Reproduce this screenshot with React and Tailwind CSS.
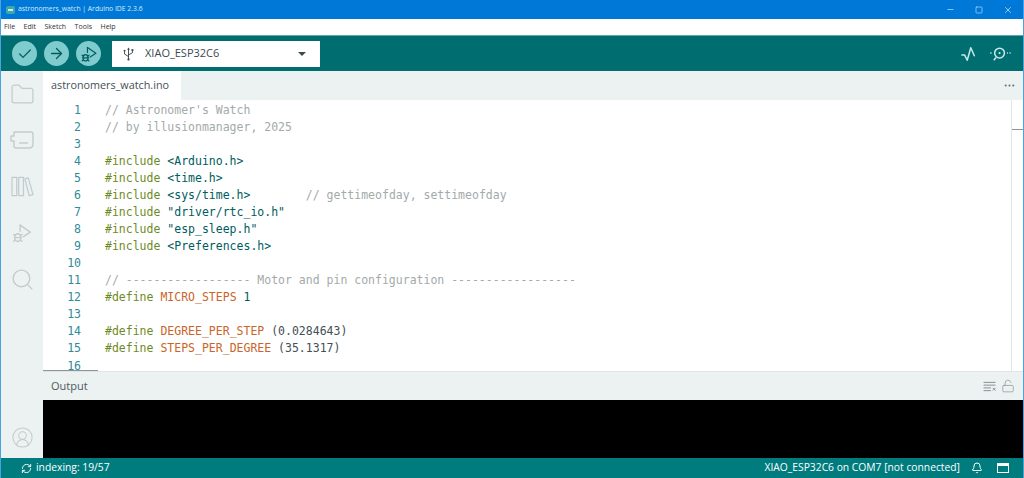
import React from 'react'
import { Check, ArrowRight, Minus, Square, X, Folder, Search, CircleUserRound, RefreshCw, Bell, LockOpen, Ellipsis } from 'lucide-react'

const uiFont = "font-['Open_Sans',sans-serif]"

// one entry per editor line, each one a list of [colour, text]
const green = 'text-[#6d8a1f]'
const teal = 'text-[#005c5f]'
const grey = 'text-[#a3aaaa]'
const orange = 'text-[#c9652a]'
const dark = 'text-[#434f54]'

const lines = [
  [[grey, "// Astronomer's Watch"]],
  [[grey, '// by illusionmanager, 2025']],
  [],
  [[green, '#include '], [teal, '<Arduino.h>']],
  [[green, '#include '], [teal, '<time.h>']],
  [[green, '#include '], [teal, '<sys/time.h>'], [grey, '        // gettimeofday, settimeofday']],
  [[green, '#include '], [teal, '"driver/rtc_io.h"']],
  [[green, '#include '], [teal, '"esp_sleep.h"']],
  [[green, '#include '], [teal, '<Preferences.h>']],
  [],
  [[grey, '// ------------------ Motor and pin configuration ------------------']],
  [[green, '#define '], [orange, 'MICRO_STEPS '], [teal, '1']],
  [],
  [[green, '#define '], [orange, 'DEGREE_PER_STEP '], [dark, '(0.0284643)']],
  [[green, '#define '], [orange, 'STEPS_PER_DEGREE '], [dark, '(35.1317)']],
  [],
]

function DebugIcon({ className }) {
  return (
    <svg viewBox="0 0 26 26" fill="none" stroke="currentColor" strokeWidth="1.5" className={className}>
      <path d="M11 4.5 L22 12 L14.5 17" strokeLinejoin="round" strokeLinecap="round" />
      <path d="M11 4.5 V11" strokeLinecap="round" />
      <ellipse cx="8.5" cy="18" rx="3.4" ry="4.2" />
      <path d="M5 18 H12 M4 14.5 L6 15.8 M13 14.5 L11 15.8 M4 22 L6 20.5 M13 22 L11 20.5" strokeLinecap="round" />
    </svg>
  )
}

function BoardIcon({ className }) {
  return (
    <svg viewBox="0 0 24 18" fill="none" stroke="currentColor" strokeWidth="1.4" className={className}>
      <path d="M4 1 H21 Q23 1 23 3 V13 Q23 17 19 17 H6 Q4 17 4 15 V10 H1 V5 H4 Z" strokeLinejoin="round" />
      <path d="M9 12 H18" />
    </svg>
  )
}

function BooksIcon({ className }) {
  return (
    <svg viewBox="0 0 24 21" fill="none" stroke="currentColor" strokeWidth="1.3" className={className}>
      <path d="M1 1 H6 V20 H1 Z M8 1 H13 V20 H8 Z M14.5 2.5 L18 1.5 L23 19 L19 20 Z" strokeLinejoin="round" />
    </svg>
  )
}

function UsbIcon({ className }) {
  return (
    <svg viewBox="0 0 12 16" fill="none" stroke="currentColor" strokeWidth="1.1" className={className}>
      <path d="M6 2 V15" />
      <path d="M6 0.5 L7.6 3 H4.4 Z" fill="currentColor" stroke="none" />
      <circle cx="6" cy="14.2" r="1.3" fill="currentColor" stroke="none" />
      <path d="M1.5 5 V8 L6 11 M10.5 4 V6.5 L6 9" />
      <circle cx="1.5" cy="4.3" r="1.1" fill="currentColor" stroke="none" />
      <rect x="9.4" y="2.4" width="2.2" height="2.2" fill="currentColor" stroke="none" />
    </svg>
  )
}

function ClearIcon({ className }) {
  return (
    <svg viewBox="0 0 14 12" fill="none" stroke="currentColor" strokeWidth="1" className={className}>
      <path d="M0 1.5 H13 M0 4.5 H13 M0 7.5 H8 M0 10.5 H8 M10 7.5 L13 10.5 M13 7.5 L10 10.5" />
    </svg>
  )
}

function PlotterIcon({ className }) {
  return (
    <svg viewBox="0 0 18 18" fill="none" stroke="currentColor" strokeWidth="1.7" className={className}>
      <path d="M1 10 L4 10 L7 16 L11 2 L15 11" strokeLinejoin="round" strokeLinecap="round" />
    </svg>
  )
}

function MonitorIcon({ className }) {
  return (
    <svg viewBox="0 0 24 18" fill="none" stroke="currentColor" strokeWidth="1.7" className={className}>
      <circle cx="11.5" cy="8" r="5.5" />
      <circle cx="11.5" cy="8" r="1.2" fill="currentColor" stroke="none" />
      <path d="M7.5 13 L5 16 M1 8 H2.5 M20 8 H21 M22.7 8 H24" />
    </svg>
  )
}

function RoundButton({ children }) {
  return (
    <div className="w-[25px] h-[25px] rounded-full bg-[#7fcbcd] flex items-center justify-center text-[#005c5f]">
      {children}
    </div>
  )
}

export default function App() {
  return (
    <div className={`w-[1024px] h-[478px] overflow-hidden flex flex-col border-x border-[#4aa3df] bg-white ${uiFont}`}>
      {/* title bar */}
      <div className="h-[19px] shrink-0 bg-[#0078d7] text-white flex items-center pl-[5px]">
        <div className="w-[9px] h-[8px] rounded-[2px] bg-[#3fa9a9] mr-[3px] flex items-center justify-center">
          <div className="w-[5px] h-[2px] bg-[#cfe9e9]" />
        </div>
        <span className="text-[6.8px] text-[#d6ebfb]">astronomers_watch | Arduino IDE 2.3.6</span>
        <div className="ml-auto flex items-center text-[#b9dcf7]">
          <div className="w-[30px] flex justify-center"><Minus size={9} /></div>
          <div className="w-[28px] flex justify-center"><Square size={8} /></div>
          <div className="w-[30px] flex justify-center"><X size={10} /></div>
        </div>
      </div>

      {/* menu */}
      <div className="h-[16px] shrink-0 bg-white flex items-center gap-[8.5px] pl-[3px] text-[7px] text-[#333]">
        <span>File</span><span>Edit</span><span>Sketch</span><span>Tools</span><span>Help</span>
      </div>

      {/* toolbar */}
      <div className="h-[36px] shrink-0 bg-[#006d70] border-t border-[#5fa9ab] flex items-center pl-[11px] pr-[11px]">
        <div className="flex gap-[7px]">
          <RoundButton><Check size={16} strokeWidth={1.8} /></RoundButton>
          <RoundButton><ArrowRight size={17} strokeWidth={1.8} /></RoundButton>
          <RoundButton><DebugIcon className="w-[20px] h-[20px]" /></RoundButton>
        </div>
        <div className="ml-[11px] w-[208px] h-[26px] bg-white flex items-center pl-[11px] pr-[14px] text-[#3c4a4e]">
          <UsbIcon className="w-[11px] h-[14px]" />
          <span className="ml-[11px] text-[11px]">XIAO_ESP32C6</span>
          <div className="ml-auto w-0 h-0 border-x-[4px] border-x-transparent border-t-[4px] border-t-[#3c4a4e]" />
        </div>
        <div className="ml-auto flex items-center gap-[12px] text-[#c6e8e8] mr-[1px]">
          <PlotterIcon className="w-[16px] h-[16px]" />
          <MonitorIcon className="w-[22px] h-[16px]" />
        </div>
      </div>

      {/* main area */}
      <div className="flex-1 min-h-0 flex">
        <div className="w-[42px] shrink-0 bg-[#ecf1f1] flex flex-col items-center pt-[11px] text-[#c3cccc]">
          <Folder size={25} strokeWidth={1.2} />
          <BoardIcon className="w-[24px] h-[18px] mt-[24px]" />
          <BooksIcon className="w-[23px] h-[21px] mt-[27px]" />
          <DebugIcon className="w-[24px] h-[24px] mt-[24px]" />
          <Search size={25} strokeWidth={1.3} className="mt-[22px]" />
          <CircleUserRound size={23} strokeWidth={1.1} className="mt-auto mb-[9px]" />
        </div>

        <div className="flex-1 min-w-0 flex flex-col">
          {/* tabs */}
          <div className="h-[29px] shrink-0 bg-[#ecf1f1] flex items-center">
            <div className="w-[138px] h-full bg-white flex items-center pl-[8px] text-[10.8px] text-[#434f54]">
              astronomers_watch.ino
            </div>
            <Ellipsis size={13} className="ml-auto mr-[7px] text-[#6a7376]" />
          </div>

          {/* editor */}
          <div className="flex-1 min-h-0 relative overflow-hidden pt-[1.6px] font-['DejaVu_Sans_Mono',monospace] text-[11.5px] leading-[17.07px]">
            {lines.map((parts, i) => (
              <div key={i} className="flex h-[17.07px]">
                <span className="w-[38px] text-right text-[#2f8a9a] shrink-0">{i + 1}</span>
                <span className="ml-[24px] whitespace-pre">
                  {parts.map(([color, text], j) => (
                    <span key={j} className={color}>{text}</span>
                  ))}
                </span>
              </div>
            ))}
            <div className="absolute top-0 bottom-0 right-0 w-[12px] border-l border-[#e3e6e6]">
              <div className="mt-[29px] h-[1px] bg-[#8f9595]" />
            </div>
            <div className="absolute bottom-0 left-0 w-[55px] h-[1px] bg-[#8f9595]" />
          </div>

          {/* output */}
          <div className="h-[29px] shrink-0 bg-[#ecf1f1] border-t border-[#dfe4e4] flex items-center pl-[8px] pr-[8px] text-[11px] text-[#4e5b61]">
            <span>Output</span>
            <div className="ml-auto flex items-center gap-[4px] text-[#7f8a8c]">
              <ClearIcon className="w-[14px] h-[11px]" />
              <LockOpen size={14} strokeWidth={1.1} />
            </div>
          </div>
          <div className="h-[58px] shrink-0 bg-black" />
        </div>
      </div>

      {/* status bar */}
      <div className="h-[20px] shrink-0 bg-[#007b7e] flex items-center pl-[20px] pr-[14px] text-[10.3px] text-white">
        <RefreshCw size={11} />
        <span className="ml-[4px]">indexing: 19/57</span>
        <span className="ml-auto">XIAO_ESP32C6 on COM7 [not connected]</span>
        <Bell size={12} className="ml-[11px]" />
        <div className="ml-[14px] w-[12px] h-[10px] border border-white border-t-[3px]" />
      </div>
    </div>
  )
}
